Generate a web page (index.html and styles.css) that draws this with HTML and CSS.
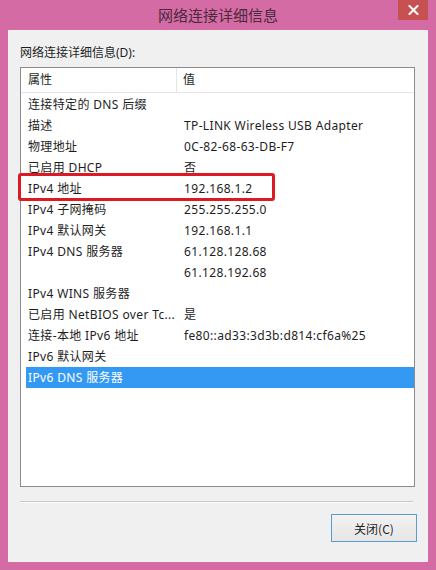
FILE: index.html
```html
<!DOCTYPE html>
<html lang="zh-CN">
<head>
<meta charset="utf-8">
<title>网络连接详细信息</title>
<link rel="stylesheet" href="styles.css">
</head>
<body>
<div class="window">
  <div class="titlebar">
    <div class="title">网络连接详细信息</div>
    <div class="close">
      <svg width="11" height="10" viewBox="0 0 11 10"><path d="M1.5 1 L9.5 9 M9.5 1 L1.5 9" stroke="#fff" stroke-width="2" stroke-linecap="square"/></svg>
    </div>
  </div>
  <div class="panel">
    <div class="label">网络连接详细信息(D):</div>
    <div class="list">
      <div class="header">
        <div class="hcell c1">属性</div>
        <div class="hcell c2">值</div>
      </div>
      <div class="rows">
        <div class="row"><span class="c1">连接特定的 DNS 后缀</span><span class="c2"></span></div>
        <div class="row"><span class="c1">描述</span><span class="c2">TP-LINK Wireless USB Adapter</span></div>
        <div class="row"><span class="c1">物理地址</span><span class="c2">0C-82-68-63-DB-F7</span></div>
        <div class="row"><span class="c1">已启用 DHCP</span><span class="c2">否</span></div>
        <div class="row"><span class="c1">IPv4 地址</span><span class="c2">192.168.1.2</span></div>
        <div class="row"><span class="c1">IPv4 子网掩码</span><span class="c2">255.255.255.0</span></div>
        <div class="row"><span class="c1">IPv4 默认网关</span><span class="c2">192.168.1.1</span></div>
        <div class="row"><span class="c1">IPv4 DNS 服务器</span><span class="c2">61.128.128.68</span></div>
        <div class="row"><span class="c1"></span><span class="c2">61.128.192.68</span></div>
        <div class="row"><span class="c1">IPv4 WINS 服务器</span><span class="c2"></span></div>
        <div class="row"><span class="c1">已启用 NetBIOS over Tc...</span><span class="c2">是</span></div>
        <div class="row"><span class="c1">连接-本地 IPv6 地址</span><span class="c2">fe80::ad33:3d3b:d814:cf6a%25</span></div>
        <div class="row"><span class="c1">IPv6 默认网关</span><span class="c2"></span></div>
        <div class="row selected"><span class="c1">IPv6 DNS 服务器</span><span class="c2"></span></div>
      </div>
      <div class="highlight"></div>
    </div>
    <div class="separator"></div>
    <div class="buttons">
      <button class="btn">关闭(C)</button>
    </div>
  </div>
</div>
</body>
</html>
```
FILE: styles.css
```css
html, body {
  margin: 0;
  padding: 0;
}
body {
  width: 436px;
  height: 570px;
  background: #d46ba4;
  font-family: "Noto Sans", "Noto Sans CJK SC", sans-serif;
  font-size: 12px;
  color: #1e1e1e;
  overflow: hidden;
}
.window {
  display: flex;
  flex-direction: column;
  height: 570px;
  padding: 0 8px 8px 8px;
  box-sizing: border-box;
}
.titlebar {
  height: 30px;
  position: relative;
  display: flex;
  justify-content: center;
  align-items: center;
}
.title {
  font-family: "Noto Sans CJK SC", sans-serif;
  font-size: 15px;
  color: #4a2a3c;
  margin-top: -1px;
}
.close {
  position: absolute;
  right: 0;
  top: 0;
  width: 30px;
  height: 20px;
  background: #c75050;
  display: flex;
  align-items: center;
  justify-content: center;
}
.panel {
  flex: 1;
  background: #f0f0f0;
  padding: 14px 13px 0 12px;
  display: flex;
  flex-direction: column;
}
.label {
  height: 17px;
  line-height: 17px;
  margin-bottom: 6px;
}
.list {
  position: relative;
  height: 420px;
  box-sizing: border-box;
  border: 1px solid #8c8c8c;
  background: #fff;
}
.header {
  display: flex;
  border-bottom: 1px solid #e5e5e5;
  box-sizing: border-box;
  height: 25px;
}
.hcell {
  line-height: 24px;
  padding-left: 7px;
  color: #1e1e1e;
}
.hcell.c1 {
  width: 148px;
  border-right: 1px solid #e5e5e5;
}
.hcell.c2 {
  flex: 1;
  padding-left: 6px;
}
.rows {
  padding: 1px 0 0 5px;
}
.row {
  display: flex;
  height: 21px;
  line-height: 21px;
  white-space: nowrap;
  letter-spacing: 0.35px;
}
.row .c1 {
  width: 156px;
  padding-left: 2px;
  overflow: hidden;
}
.row .c2 {
  flex: 1;
}
.row.selected {
  background: #3399f3;
  color: #fff;
}
.highlight {
  position: absolute;
  left: -3px;
  top: 105px;
  width: 251px;
  height: 22px;
  border: 3px solid #dd1a22;
  border-radius: 3px;
}
.separator {
  margin-top: 14px;
  height: 1px;
  width: 393px;
  background: #c8c8c8;
  border-bottom: 1px solid #fafafa;
}
.buttons {
  display: flex;
  justify-content: flex-end;
  margin-top: 11px;
  margin-right: -2px;
}
.btn {
  width: 86px;
  height: 28px;
  border: 1px solid #5b9ccd;
  background: linear-gradient(#f2f2f2, #e6e6e6);
  font-family: "Noto Sans CJK SC", sans-serif;
  font-size: 12px;
  color: #1e1e1e;
  padding: 0;
}
```
